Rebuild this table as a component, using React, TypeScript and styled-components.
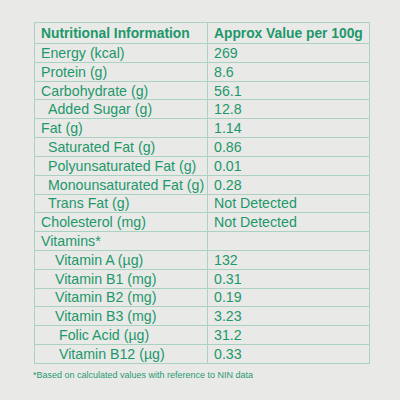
import React from 'react';
import styled, { createGlobalStyle } from 'styled-components';

const GlobalStyle = createGlobalStyle`
  body {
    margin: 0;
    background: #e9e9e8;
    font-family: 'Liberation Sans', Arial, sans-serif;
  }
`;

const Page = styled.div`
  width: 400px;
  height: 400px;
  padding: 22px 0 0 34px;
  box-sizing: border-box;
`;

const Table = styled.table`
  border-collapse: collapse;
  width: 335px;
  table-layout: fixed;
  color: #1d986a;
`;

const HeadCell = styled.th`
  height: 21px;
  padding: 0 0 0 6px;
  border: 1px solid #a9d2c1;
  text-align: left;
  font-size: 13.8px;
  font-weight: 700;
  white-space: nowrap;
  box-sizing: border-box;
`;

const Cell = styled.td<{ $indent?: number }>`
  height: 18.82px;
  padding: 0 0 0 ${(p) => 6 + (p.$indent ?? 0)}px;
  border: 1px solid #a9d2c1;
  font-size: 14.2px;
  line-height: 16px;
  white-space: nowrap;
  box-sizing: border-box;
`;

const Note = styled.p`
  margin: 6px 0 0 -1px;
  font-size: 9px;
  color: #2a9a70;
`;

const rows: [string, string, number][] = [
  ['Energy (kcal)', '269', 0],
  ['Protein (g)', '8.6', 0],
  ['Carbohydrate (g)', '56.1', 0],
  ['Added Sugar (g)', '12.8', 7],
  ['Fat (g)', '1.14', 0],
  ['Saturated Fat (g)', '0.86', 7],
  ['Polyunsaturated Fat (g)', '0.01', 7],
  ['Monounsaturated Fat (g)', '0.28', 7],
  ['Trans Fat (g)', 'Not Detected', 7],
  ['Cholesterol (mg)', 'Not Detected', 0],
  ['Vitamins*', '', 0],
  ['Vitamin A (µg)', '132', 14],
  ['Vitamin B1 (mg)', '0.31', 14],
  ['Vitamin B2 (mg)', '0.19', 14],
  ['Vitamin B3 (mg)', '3.23', 14],
  ['Folic Acid (µg)', '31.2', 18],
  ['Vitamin B12 (µg)', '0.33', 18],
];

export default function App() {
  return (
    <Page>
      <GlobalStyle />
      <Table>
        <colgroup>
          <col style={{ width: 173 }} />
          <col style={{ width: 162 }} />
        </colgroup>
        <thead>
          <tr>
            <HeadCell>Nutritional Information</HeadCell>
            <HeadCell>Approx Value per 100g</HeadCell>
          </tr>
        </thead>
        <tbody>
          {rows.map(([name, value, indent]) => (
            <tr key={name}>
              <Cell $indent={indent}>{name}</Cell>
              <Cell>{value}</Cell>
            </tr>
          ))}
        </tbody>
      </Table>
      <Note>*Based on calculated values with reference to NIN data</Note>
    </Page>
  );
}
